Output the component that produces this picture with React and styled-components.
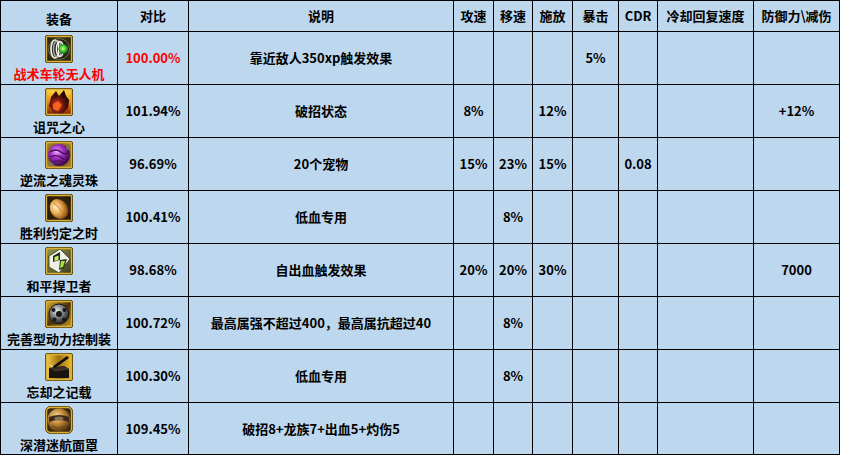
import React from "react";
import styled, { createGlobalStyle } from "styled-components";

const Global = createGlobalStyle`
  html, body { margin: 0; padding: 0; background: #ffffff; }
  body { font-family: "Noto Sans CJK SC", "Noto Sans", sans-serif; }
`;

const COLS = [117, 71, 265, 40, 39, 40, 46, 39, 96, 86];

const Table = styled.div`
  box-sizing: border-box;
  display: grid;
  grid-template-columns: ${COLS.map((c) => c + "px").join(" ")};
  grid-template-rows: 31px repeat(7, 53px) 52px;
  width: 840px;
  border-left: 1px solid #000;
  border-top: 1px solid #000;
  background: #bdd7ee;
`;

const Cell = styled.div`
  box-sizing: border-box;
  border-right: 1px solid #000;
  border-bottom: 1px solid #000;
  display: flex;
  align-items: center;
  justify-content: center;
  font-size: 13px;
  font-weight: 700;
  line-height: 16px;
  white-space: nowrap;
  color: ${(p) => (p.$red ? "#ff0000" : "#000000")};
`;

const HeadCell = styled(Cell)`
  padding-top: ${(p) => (p.$low ? "5px" : "0")};
`;

const ItemCell = styled(Cell)`
  flex-direction: column;
  gap: 3px;
  padding-top: 1px;
`;

const IconBox = styled.svg`
  display: block;
  width: 28px;
  height: 28px;
`;

const ItemName = styled.span`
  display: block;
`;

const Frame = ({ children, id, bg, round }) => (
  <IconBox viewBox="0 0 28 28">
    <defs>{bg}</defs>
    <rect x="0.5" y="0.5" width="27" height="27" rx={round ? 5 : 1.5} fill={`url(#${id}bg)`} stroke="#5a4408" />
    {children}
    <rect x="1.5" y="1.5" width="25" height="25" rx={round ? 4 : 1} fill="none" stroke="#d9b13a" strokeWidth="1.3" />
  </IconBox>
);

const IconDrone = () => (
  <Frame
    id="i1"
    bg={
      <>
        <radialGradient id="i1bg" cx="50%" cy="50%" r="70%">
          <stop offset="0" stopColor="#5a5020" />
          <stop offset="1" stopColor="#1c1a08" />
        </radialGradient>
        <radialGradient id="i1g" cx="45%" cy="45%" r="55%">
          <stop offset="0" stopColor="#d8ff90" />
          <stop offset="0.55" stopColor="#3ecb2a" />
          <stop offset="1" stopColor="#145a0c" />
        </radialGradient>
      </>
    }
  >
    <circle cx="14" cy="14" r="10.5" fill="#23231a" stroke="#6a6a48" strokeWidth="1" />
    <ellipse cx="10" cy="14" rx="4" ry="9" fill="none" stroke="#f0f0e8" strokeWidth="1.7" />
    <ellipse cx="12.5" cy="14" rx="4" ry="8.3" fill="none" stroke="#a8a8a0" strokeWidth="1.5" />
    <ellipse cx="15" cy="14" rx="3.6" ry="7.4" fill="none" stroke="#f4f4ee" strokeWidth="1.5" />
    <circle cx="18.5" cy="14" r="4.8" fill="url(#i1g)" />
  </Frame>
);

const IconHeart = () => (
  <Frame
    id="i2"
    bg={
      <>
        <linearGradient id="i2bg" x1="0" y1="0" x2="0" y2="1">
          <stop offset="0" stopColor="#ffe050" />
          <stop offset="0.45" stopColor="#f09010" />
          <stop offset="1" stopColor="#7a1c00" />
        </linearGradient>
        <radialGradient id="i2h" cx="40%" cy="65%" r="60%">
          <stop offset="0" stopColor="#f05020" />
          <stop offset="0.5" stopColor="#741810" />
          <stop offset="1" stopColor="#1c0505" />
        </radialGradient>
      </>
    }
  >
    <path d="M6 9 L11 3 L14 8 L19 2 L21 8 L24 12 L23 20 L17 26 L9 25 L4 18 Z" fill="url(#i2h)" />
    <path d="M8 16 L13 13 L17 17 L13 23 L8 21 Z" fill="#ff6a18" opacity="0.85" />
    <path d="M16 6 L20 4 L19 11 Z" fill="#240806" />
    <path d="M11 5 L13 9 L9 10 Z" fill="#3a0c08" />
  </Frame>
);

const IconOrb = () => (
  <Frame
    id="i3"
    bg={
      <>
        <radialGradient id="i3bg" cx="50%" cy="50%" r="70%">
          <stop offset="0" stopColor="#3a2a10" />
          <stop offset="1" stopColor="#c09a28" />
        </radialGradient>
        <radialGradient id="i3o" cx="40%" cy="35%" r="65%">
          <stop offset="0" stopColor="#f2a8ff" />
          <stop offset="0.45" stopColor="#a030c0" />
          <stop offset="1" stopColor="#3a0848" />
        </radialGradient>
      </>
    }
  >
    <circle cx="14" cy="14" r="11" fill="url(#i3o)" />
    <path d="M5 11 Q11 7 16 11 T24 10" fill="none" stroke="#4a0a5a" strokeWidth="1.5" />
    <path d="M5 16 Q12 13 17 17 T23 16" fill="none" stroke="#4a0a5a" strokeWidth="1.3" />
    <path d="M8 21 Q14 18 20 22" fill="none" stroke="#4a0a5a" strokeWidth="1.1" />
    <path d="M4 20 L9 23 L6 25 Z" fill="#707070" />
    <path d="M22 5 L25 9 L21 8 Z" fill="#707070" />
  </Frame>
);

const IconSeed = () => (
  <Frame
    id="i4"
    bg={
      <>
        <radialGradient id="i4bg" cx="50%" cy="50%" r="70%">
          <stop offset="0" stopColor="#4a3410" />
          <stop offset="1" stopColor="#1a1204" />
        </radialGradient>
        <radialGradient id="i4s" cx="40%" cy="35%" r="65%">
          <stop offset="0" stopColor="#fff2c8" />
          <stop offset="0.5" stopColor="#e8a850" />
          <stop offset="1" stopColor="#8a4a10" />
        </radialGradient>
      </>
    }
  >
    <ellipse cx="14" cy="15" rx="8.5" ry="10.5" transform="rotate(-35 14 15)" fill="url(#i4s)" />
    <path d="M8 8 Q14 14 21 22" fill="none" stroke="#b86a20" strokeWidth="0.8" />
  </Frame>
);

const IconGuard = () => (
  <Frame
    id="i5"
    bg={
      <>
        <linearGradient id="i5bg" x1="0" y1="0" x2="1" y2="1">
          <stop offset="0" stopColor="#9a9a48" />
          <stop offset="1" stopColor="#3a3a18" />
        </linearGradient>
      </>
    }
  >
    <path d="M4 9 L15 2 L25 12 L14 26 L4 20 Z" fill="#eef2e6" stroke="#303020" strokeWidth="0.8" />
    <path d="M8 9 L15 5 L15 13 L8 15 Z" fill="#1e2a1a" />
    <path d="M15 13 L22 12 L19 21 L14 23 Z" fill="#2a3420" />
    <path d="M9.5 10 L13.5 8.5 L13.5 13 L9.5 14 Z" fill="#c8f060" />
    <path d="M16 14 L20 14 L18 20 L15 21 Z" fill="#a8e040" />
  </Frame>
);

const IconGear = () => (
  <Frame
    id="i6"
    bg={
      <>
        <linearGradient id="i6bg" x1="0" y1="0" x2="1" y2="1">
          <stop offset="0" stopColor="#e8b830" />
          <stop offset="0.5" stopColor="#4a3208" />
          <stop offset="1" stopColor="#d0a020" />
        </linearGradient>
        <radialGradient id="i6s" cx="40%" cy="35%" r="65%">
          <stop offset="0" stopColor="#ececec" />
          <stop offset="0.5" stopColor="#808080" />
          <stop offset="1" stopColor="#202020" />
        </radialGradient>
      </>
    }
  >
    <circle cx="14" cy="14" r="10" fill="url(#i6s)" stroke="#181818" strokeWidth="1" />
    <circle cx="14" cy="14" r="3" fill="#181818" />
    <circle cx="8.5" cy="10" r="2" fill="#181818" />
    <circle cx="19.5" cy="10" r="2" fill="#181818" />
    <circle cx="9.5" cy="19.5" r="2" fill="#181818" />
    <circle cx="19" cy="19.5" r="2" fill="#181818" />
  </Frame>
);

const IconBook = () => (
  <Frame
    id="i7"
    bg={
      <>
        <linearGradient id="i7bg" x1="0" y1="0" x2="1" y2="0">
          <stop offset="0" stopColor="#f6d048" />
          <stop offset="0.5" stopColor="#a07010" />
          <stop offset="1" stopColor="#f0c030" />
        </linearGradient>
      </>
    }
  >
    <path d="M4 15 L19 13 L24 16 L24 25 L4 25 Z" fill="#1a1410" />
    <path d="M4 15 L19 13 L24 16 L9 18 Z" fill="#3a3028" />
    <path d="M9 18 L24 16" stroke="#5a4a3a" strokeWidth="0.6" />
    <path d="M7 14 L22 3 L24 5 L10 15 Z" fill="#101010" />
    <path d="M5 12 L8 14" stroke="#fff4c0" strokeWidth="1" />
  </Frame>
);

const IconMask = () => (
  <Frame
    id="i8"
    round
    bg={
      <>
        <radialGradient id="i8bg" cx="50%" cy="50%" r="70%">
          <stop offset="0" stopColor="#6a4a18" />
          <stop offset="1" stopColor="#2a1a06" />
        </radialGradient>
        <radialGradient id="i8s" cx="40%" cy="35%" r="65%">
          <stop offset="0" stopColor="#ffe0a0" />
          <stop offset="0.5" stopColor="#c08838" />
          <stop offset="1" stopColor="#5a3a10" />
        </radialGradient>
      </>
    }
  >
    <circle cx="14" cy="14" r="11.5" fill="url(#i8s)" />
    <path d="M4 11 Q14 7 24 11 L24 16 Q14 12 4 16 Z" fill="#3a2a18" />
    <ellipse cx="14" cy="12.5" rx="4.5" ry="2" fill="#8a7050" />
    <path d="M8 20 Q14 24 20 20" fill="none" stroke="#6a4818" strokeWidth="1.2" />
  </Frame>
);

const HEADERS = ["装备", "对比", "说明", "攻速", "移速", "施放", "暴击", "CDR", "冷却回复速度", "防御力\\减伤"];

const ROWS = [
  { icon: IconDrone, name: "战术车轮无人机", red: true, vals: ["100.00%", "靠近敌人350xp触发效果", "", "", "", "5%", "", "", ""] },
  { icon: IconHeart, name: "诅咒之心", vals: ["101.94%", "破招状态", "8%", "", "12%", "", "", "", "+12%"] },
  { icon: IconOrb, name: "逆流之魂灵珠", vals: ["96.69%", "20个宠物", "15%", "23%", "15%", "", "0.08", "", ""] },
  { icon: IconSeed, name: "胜利约定之时", vals: ["100.41%", "低血专用", "", "8%", "", "", "", "", ""] },
  { icon: IconGuard, name: "和平捍卫者", vals: ["98.68%", "自出血触发效果", "20%", "20%", "30%", "", "", "", "7000"] },
  { icon: IconGear, name: "完善型动力控制装", vals: ["100.72%", "最高属强不超过400，最高属抗超过40", "", "8%", "", "", "", "", ""] },
  { icon: IconBook, name: "忘却之记载", vals: ["100.30%", "低血专用", "", "8%", "", "", "", "", ""] },
  { icon: IconMask, name: "深潜迷航面罩", vals: ["109.45%", "破招8+龙族7+出血5+灼伤5", "", "", "", "", "", "", ""] },
];

export default function App() {
  return (
    <>
      <Global />
      <Table>
        {HEADERS.map((h, i) => (
          <HeadCell key={h} $low={i === 0}>
            {h}
          </HeadCell>
        ))}
        {ROWS.map((r) => {
          const Icon = r.icon;
          return (
            <React.Fragment key={r.name}>
              <ItemCell $red={r.red}>
                <Icon />
                <ItemName>{r.name}</ItemName>
              </ItemCell>
              {r.vals.map((v, j) => (
                <Cell key={j} $red={r.red && j === 0}>
                  {v}
                </Cell>
              ))}
            </React.Fragment>
          );
        })}
      </Table>
    </>
  );
}
